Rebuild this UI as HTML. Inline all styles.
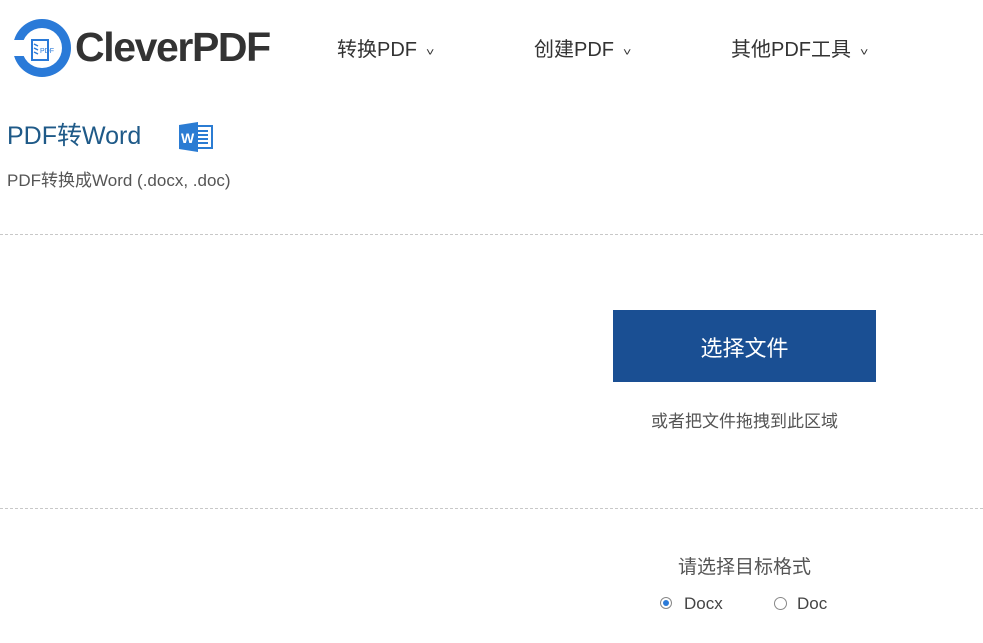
<!DOCTYPE html>
<html><head><meta charset="utf-8"><style>
body{margin:0;width:983px;height:643px;overflow:hidden;background:#fff;font-family:"Liberation Sans","Noto Sans CJK SC",sans-serif;color:#333;position:relative}
.a{position:absolute;white-space:nowrap}
.nav{font-size:20px;color:#333}
.nav span{font-size:11px;margin-left:10px;display:inline-block;transform:scaleX(1.3)}
.hr{position:absolute;left:0;width:983px;border-top:1px dashed #c8c8c8}
</style></head><body>
<svg class="a" style="left:12px;top:18px" width="60" height="60" viewBox="0 0 60 60">
<circle cx="30" cy="30" r="29" fill="#2a7ad8"/>
<circle cx="30" cy="30" r="20" fill="#fff"/>
<rect x="0" y="22" width="26" height="16" fill="#fff"/>
<path d="M20 22h16v20h-16z" fill="#fff" stroke="#2a7ad8" stroke-width="2"/>
<path d="M22 26l4 2M22 30l4 2M22 34l4 2" stroke="#2a7ad8" stroke-width="1.5"/>
<text x="28" y="35" font-size="7" fill="#2a7ad8" font-family="Liberation Sans">PDF</text>
</svg>
<div class="a" style="left:75px;top:24px;font-size:41px;font-weight:bold;color:#333;letter-spacing:-1.4px">CleverPDF</div>
<div class="a nav" style="left:337px;top:33px">转换PDF<span>˅</span></div>
<div class="a nav" style="left:534px;top:33px">创建PDF<span>˅</span></div>
<div class="a nav" style="left:731px;top:33px">其他PDF工具<span>˅</span></div>
<div class="a" style="left:7px;top:116px;font-size:25px;color:#1f5a88">PDF转Word</div>
<svg class="a" style="left:178px;top:120px" width="36" height="34" viewBox="0 0 36 32">
<rect x="14" y="5" width="20" height="22" fill="#fff" stroke="#2b7cd3" stroke-width="2"/>
<path d="M18 10h12M18 14h12M18 18h12M18 22h12" stroke="#2b7cd3" stroke-width="2"/>
<path d="M1 4l19-3v30l-19-3z" fill="#2b7cd3"/>
<text x="3" y="22" font-size="14" font-weight="bold" fill="#fff" font-family="Liberation Sans">W</text>
</svg>
<div class="a" style="left:7px;top:166px;font-size:17px;color:#555">PDF转换成Word (.docx, .doc)</div>
<div class="hr" style="top:234px"></div>
<div class="a" style="left:613px;top:310px;width:263px;height:72px;background:#1a4f93;color:#fff;font-size:22px;text-align:center;line-height:78px">选择文件</div>
<div class="a" style="left:613px;top:407px;width:263px;text-align:center;font-size:17px;color:#555">或者把文件拖拽到此区域</div>
<div class="hr" style="top:508px"></div>
<div class="a" style="left:613px;top:552px;width:263px;text-align:center;font-size:19px;color:#555">请选择目标格式</div>
<div class="a" style="left:660px;top:597px;width:12px;height:12px;border:1px solid #888;border-radius:50%;box-sizing:border-box"><div style="position:absolute;left:2px;top:2px;width:6px;height:6px;border-radius:50%;background:#2a7ad8"></div></div>
<div class="a" style="left:684px;top:594px;font-size:17px;color:#444">Docx</div>
<div class="a" style="left:774px;top:597px;width:13px;height:13px;border:1px solid #888;border-radius:50%;box-sizing:border-box"></div>
<div class="a" style="left:797px;top:594px;font-size:17px;color:#444">Doc</div>
</body></html>
